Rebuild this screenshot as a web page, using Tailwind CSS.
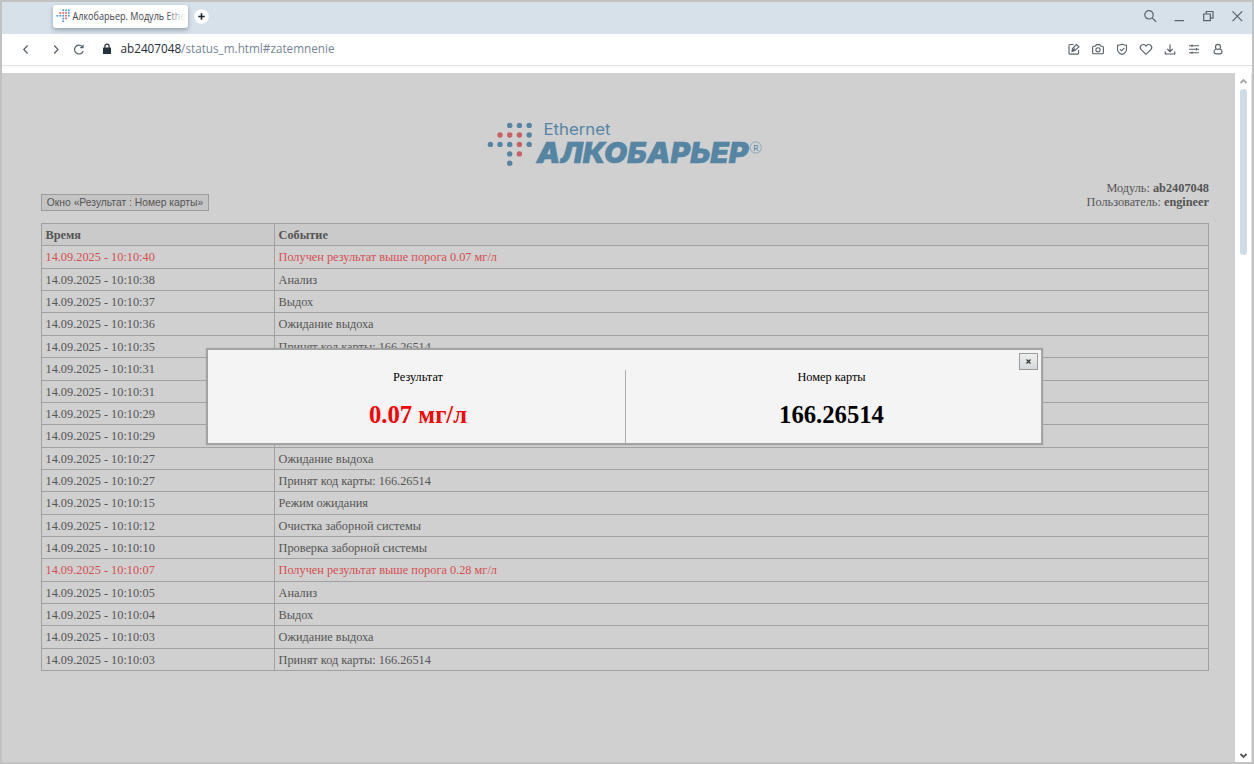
<!DOCTYPE html>
<html lang="ru">
	<head>
		<meta charset="utf-8">
		<title>Алкобарьер. Модуль Ethernet</title>
		<script src="https://cdn.jsdelivr.net/npm/@tailwindcss/browser@4"></script>
	</head>

	<body class="w-[1254px] h-[764px] overflow-hidden bg-white">
		<div class="relative flex flex-col w-[1254px] h-[764px] border-2 border-[#c2c2c2] bg-white">

			<!-- tabs -->
			<header class="flex items-start h-8 shrink-0 bg-[#d7e1ea] pl-[51px] pr-[7px]">
				<div class="flex items-center w-[135px] h-[23px] mt-[3px] pl-[3px] rounded-[3px] bg-white shadow-[0_2px_4px_rgba(60,80,100,0.45)] overflow-hidden">
					<svg class="w-[14px] h-[14px] shrink-0 mt-[-2px]" viewBox="0 0 14 14">
						<g fill="#4b9cd3"><circle cx="7.2" cy="1.3" r="1"/><circle cx="10" cy="1.3" r="1"/><circle cx="12.8" cy="1.3" r="1"/><circle cx="12.8" cy="4" r="1"/><circle cx="1.4" cy="6.7" r="1"/><circle cx="4.3" cy="6.7" r="1"/><circle cx="7.2" cy="6.7" r="1"/><circle cx="12.8" cy="6.7" r="1"/><circle cx="7.2" cy="9.4" r="1"/><circle cx="7.2" cy="12.2" r="1"/></g>
						<g fill="#f0616a"><circle cx="4.3" cy="4" r="1"/><circle cx="7.2" cy="4" r="1"/><circle cx="10" cy="4" r="1"/><circle cx="10" cy="6.7" r="1"/><circle cx="10" cy="9.4" r="1"/></g>
					</svg>
					<svg class="w-[115px] h-[20px] ml-[2px] shrink-0" viewBox="0 0 115 20">
						<defs><linearGradient id="fade"><stop offset=".82" stop-color="#3c4247"/><stop offset="1" stop-color="#3c4247" stop-opacity="0"/></linearGradient></defs>
						<text x="0.5" y="13" textLength="113" lengthAdjust="spacingAndGlyphs" font-family="Open Sans, sans-serif" font-size="10.300" fill="url(#fade)">Алкобарьер. Модуль Ethe</text>
					</svg>
				</div>
				<svg class="w-[15px] h-[15px] ml-[6px] mt-[7px]" viewBox="0 0 15 15"><circle cx="7.500" cy="7.500" r="7.300" fill="#fff"/><path d="M7.500 4.300v6.400M4.300 7.500h6.400" stroke="#20252b" stroke-width="1.6"/></svg>
				<div class="flex ml-auto mt-[6px] gap-[13px]">
					<svg class="w-4 h-4" viewBox="0 0 16 16" fill="none" stroke="#58616a" stroke-width="1.2"><circle cx="7" cy="6.800" r="4.200"/><path d="M10.100 9.900l4 3.800"/></svg>
					<svg class="w-4 h-4" viewBox="0 0 16 16" fill="none" stroke="#58616a" stroke-width="1.2"><path d="M3.500 12.600h9.500"/></svg>
					<svg class="w-4 h-4" viewBox="0 0 16 16" fill="none" stroke="#58616a" stroke-width="1.2"><path d="M3.700 6h6.600v6.600h-6.600zM6.200 6V3.500h6.800v6.600h-2.700"/></svg>
					<svg class="w-4 h-4" viewBox="0 0 16 16" fill="none" stroke="#58616a" stroke-width="1.2"><path d="M3.500 3.400l9.700 9.700M13.200 3.400l-9.700 9.700"/></svg>
				</div>
			</header>

			<!-- address bar -->
			<nav class="flex items-center h-8 shrink-0 border-b border-[#e0e3e6] pl-4 pr-[26px]">
				<svg class="w-4 h-4 mt-[-2px]" viewBox="0 0 16 16" fill="none" stroke="#555d66" stroke-width="1.2"><path d="M9.600 4.500l-3.800 4 3.800 4"/></svg>
				<svg class="w-4 h-4 mt-[-2px] ml-[14px]" viewBox="0 0 16 16" fill="none" stroke="#555d66" stroke-width="1.2"><path d="M6.200 4.500l3.800 4-3.800 4"/></svg>
				<svg class="w-4 h-4 mt-[-2px] ml-[7px]" viewBox="0 0 16 16" fill="none" stroke="#555d66" stroke-width="1.2"><path d="M11.200 5.600a4.400 4.400 0 1 0 1 4.200M12 3.800v2.800H9.200"/></svg>
				<svg class="w-4 h-4 mt-[-2px] ml-[12px]" viewBox="0 0 16 16"><rect x="4" y="6.600" width="8" height="6.400" rx=".6" fill="#27323d"/><path d="M5.900 7V5.200a2.100 2.100 0 0 1 4.200 0V7" fill="none" stroke="#27323d" stroke-width="1.2"/></svg>
				<svg class="w-[220px] h-5 ml-[5px]" viewBox="0 0 220 20">
					<text x="0.5" y="13.300" textLength="214" lengthAdjust="spacingAndGlyphs" font-family="Open Sans, sans-serif" font-size="12.400" fill="#768593"><tspan fill="#272d33">ab2407048</tspan>/status_m.html#zatemnenie</text>
				</svg>
				<div class="flex ml-auto mt-[-2px] gap-2">
					<svg class="w-4 h-4" viewBox="0 0 16 16" fill="none" stroke="#58616a" stroke-width="1.1"><path d="M7.500 3.500H4a1 1 0 0 0-1 1v7.600a1 1 0 0 0 1 1h7.600a1 1 0 0 0 1-1V9M6 10.500l.5-3 3.800-4 2.700 2.300-4 3.700zM6 10.500l2.800-3"/></svg>
					<svg class="w-4 h-4" viewBox="0 0 16 16" fill="none" stroke="#58616a" stroke-width="1.1"><path d="M3.600 5.300h1.600l1.200-1.700h3.200l1.200 1.700h1.600a1 1 0 0 1 1 1v5.400a1 1 0 0 1-1 1H3.600a1 1 0 0 1-1-1V6.300a1 1 0 0 1 1-1z"/><circle cx="8" cy="8.800" r="2.100"/></svg>
					<svg class="w-4 h-4" viewBox="0 0 16 16" fill="none" stroke="#58616a" stroke-width="1.1"><path d="M8 3.200c1.500.8 3 1 4.500 1v4c0 2.500-2 4.200-4.500 5.200-2.500-1-4.500-2.700-4.500-5.200v-4c1.500 0 3-.2 4.500-1zM5.900 8.200l1.700 1.600 2.800-3"/></svg>
					<svg class="w-4 h-4" viewBox="0 0 16 16" fill="none" stroke="#58616a" stroke-width="1.1"><path d="M8 13.300L3.200 8.600a3 3 0 0 1 0-4.200 2.900 2.900 0 0 1 4.200 0l.6.7.6-.7a2.900 2.900 0 0 1 4.200 0 3 3 0 0 1 0 4.200z"/></svg>
					<svg class="w-4 h-4" viewBox="0 0 16 16" fill="none" stroke="#58616a" stroke-width="1.2"><path d="M8 3.500v7M5.300 8L8 10.600 10.700 8M3.300 10.500v2.500h9.400v-2.500"/></svg>
					<svg class="w-4 h-4" viewBox="0 0 16 16" fill="none" stroke="#58616a" stroke-width="1.1"><path d="M3 4.700h10M3 8.200h10M3 11.700h10M6 3.400v2.600M10.500 6.900v2.600M6 10.400v2.600"/></svg>
					<svg class="w-4 h-4" viewBox="0 0 16 16" fill="none" stroke="#58616a" stroke-width="1.1"><circle cx="8" cy="5.900" r="2.500"/><path d="M6 8c-1.300.5-2 1.500-2 2.700 0 1.500 1 2.200 2.500 2.200h3c1.500 0 2.500-.7 2.500-2.200 0-1.200-.7-2.200-2-2.700"/></svg>
				</div>
			</nav>

			<div class="flex grow mt-[7px]">
				<!-- page -->
				<main class="relative w-[1233px] h-[689px] bg-[#d0d0d0] pl-[39px] pr-[26px] font-['Liberation_Serif',serif] text-[12.3px] text-[#555]">
					<div class="flex justify-center pt-[45px]">
						<svg class="w-[280px] h-[52px]" viewBox="485 118 280 52">
							<g fill="#5585a3"><circle cx="509.7" cy="125.4" r="2.7"/><circle cx="519.4" cy="125.4" r="2.7"/><circle cx="529.2" cy="125.4" r="2.7"/><circle cx="529.2" cy="135" r="2.7"/><circle cx="490.4" cy="144.4" r="2.7"/><circle cx="500" cy="144.4" r="2.7"/><circle cx="509.7" cy="144.4" r="2.7"/><circle cx="529.2" cy="144.4" r="2.7"/><circle cx="509.7" cy="153.9" r="2.7"/><circle cx="509.7" cy="163.3" r="2.7"/></g>
							<g fill="#c86165"><circle cx="500" cy="135" r="2.7"/><circle cx="509.7" cy="135" r="2.7"/><circle cx="519.4" cy="135" r="2.7"/><circle cx="519.4" cy="144.4" r="2.7"/><circle cx="519.4" cy="153.9" r="2.7"/></g>
							<g fill="#5585a3" font-family="Inter, sans-serif">
								<text x="543.5" y="134.5" font-size="15.5" textLength="67" lengthAdjust="spacingAndGlyphs">Ethernet</text>
								<text x="536.5" y="163.3" font-size="28.8" font-weight="900" font-style="italic" stroke="#5585a3" stroke-width=".5" textLength="212" lengthAdjust="spacingAndGlyphs">АЛКОБАРЬЕР</text>
								<circle cx="755.7" cy="147.5" r="5.6" fill="none" stroke="#7c9db3" stroke-width=".8"/>
								<text x="753.3" y="150.5" font-size="8">R</text>
							</g>
						</svg>
					</div>

					<div class="flex items-end justify-between h-[39px]">
						<div class="flex items-center justify-center w-[168px] h-[17px] mb-[-2px] border border-[#9c9c9c] bg-[#c4c4c4] font-['Liberation_Sans',sans-serif] text-[10.3px] text-[#555] whitespace-nowrap">Окно «Результат : Номер карты»</div>
						<div class="text-right leading-[14px]">
							<p>Модуль: <b>ab2407048</b></p>
							<p>Пользователь: <b>engineer</b></p>
						</div>
					</div>

					<!-- event log -->
					<div class="mt-[14px] w-[1168px] border-t border-l border-[#a1a1a1] whitespace-nowrap [&>div]:flex [&>div]:h-[22.37px] [&>div]:leading-[22.6px] [&>div>p]:border-b [&>div>p]:border-r [&>div>p]:border-[#a1a1a1] [&>div>p]:pl-[3.5px] [&>div>p:first-child]:w-[233px] [&>div>p:last-child]:grow">
						<div class="font-bold bg-[#cacaca]"><p>Время</p><p>Событие</p></div>
						<div class="text-[#d44f50]"><p>14.09.2025 - 10:10:40</p><p>Получен результат выше порога 0.07 мг/л</p></div>
						<div><p>14.09.2025 - 10:10:38</p><p>Анализ</p></div>
						<div><p>14.09.2025 - 10:10:37</p><p>Выдох</p></div>
						<div><p>14.09.2025 - 10:10:36</p><p>Ожидание выдоха</p></div>
						<div><p>14.09.2025 - 10:10:35</p><p>Принят код карты: 166.26514</p></div>
						<div><p>14.09.2025 - 10:10:31</p><p></p></div>
						<div><p>14.09.2025 - 10:10:31</p><p></p></div>
						<div><p>14.09.2025 - 10:10:29</p><p></p></div>
						<div><p>14.09.2025 - 10:10:29</p><p></p></div>
						<div><p>14.09.2025 - 10:10:27</p><p>Ожидание выдоха</p></div>
						<div><p>14.09.2025 - 10:10:27</p><p>Принят код карты: 166.26514</p></div>
						<div><p>14.09.2025 - 10:10:15</p><p>Режим ожидания</p></div>
						<div><p>14.09.2025 - 10:10:12</p><p>Очистка заборной системы</p></div>
						<div><p>14.09.2025 - 10:10:10</p><p>Проверка заборной системы</p></div>
						<div class="text-[#d44f50]"><p>14.09.2025 - 10:10:07</p><p>Получен результат выше порога 0.28 мг/л</p></div>
						<div><p>14.09.2025 - 10:10:05</p><p>Анализ</p></div>
						<div><p>14.09.2025 - 10:10:04</p><p>Выдох</p></div>
						<div><p>14.09.2025 - 10:10:03</p><p>Ожидание выдоха</p></div>
						<div><p>14.09.2025 - 10:10:03</p><p>Принят код карты: 166.26514</p></div>
					</div>

					<!-- result window -->
					<div class="absolute left-[204px] top-[275px] w-[837px] h-[97px] flex items-end border-2 border-[#a2a4a3] bg-[#f4f4f4] text-black text-center shadow-[0_0_1px_#999]">
						<div class="w-[418px] h-[73px] pl-[3px] border-r border-[#adadad]">
							<p class="leading-[15px]">Результат</p>
							<p class="mt-[15px] text-[24.7px] leading-[30px] font-bold text-[#f00]">0.07 мг/л</p>
						</div>
						<div class="w-[411px] h-[73px]">
							<p class="leading-[15px]">Номер карты</p>
							<p class="mt-[15px] text-[24.7px] leading-[30px] font-bold">166.26514</p>
						</div>
						<div class="absolute right-[3px] top-[3px] flex items-center justify-center w-[19px] h-[17px] border border-[#9b9b9b] bg-linear-to-b from-[#eee] to-[#d5dadd]">
							<svg class="w-[5px] h-[5px]" viewBox="0 0 5 5" stroke="#333" stroke-width="1.2"><path d="M.5.5l4 4M4.500.5l-4 4"/></svg>
						</div>
					</div>
				</main>

				<!-- scrollbar -->
				<div class="flex flex-col items-center w-[17px] h-[689px] border-r border-[#dfe5ea]">
					<svg class="w-[9px] h-[6px] mt-[5px]" viewBox="0 0 9 6" fill="none" stroke="#a5a5a5" stroke-width="1.800"><path d="M1.500 5l3-3 3 3"/></svg>
					<div class="w-[7px] h-[166px] mt-[5px] rounded-[3px] bg-[#d1dbe4]"></div>
					<svg class="w-[9px] h-[6px] mt-auto mb-[3px]" viewBox="0 0 9 6" fill="none" stroke="#555" stroke-width="1.800"><path d="M1.500 1l3 3 3-3"/></svg>
				</div>
			</div>
		</div>
	</body>
</html>
